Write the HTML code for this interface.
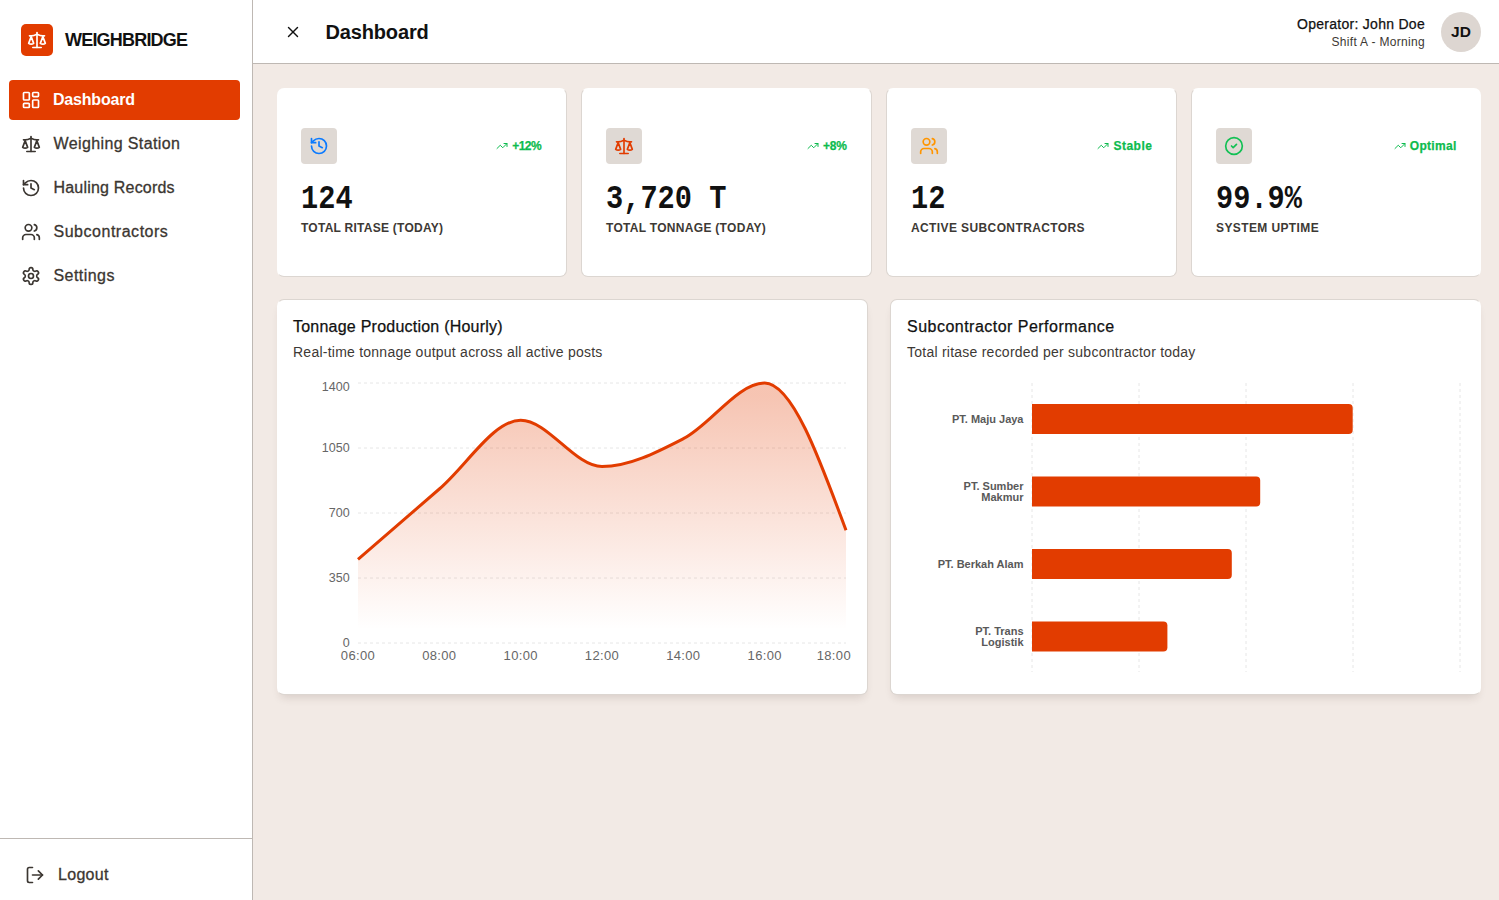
<!DOCTYPE html>
<html><head><meta charset="utf-8">
<style>
*{box-sizing:border-box;margin:0;padding:0}
html,body{width:1499px;height:900px;overflow:hidden;background:#f2eae5;font-family:"Liberation Sans",sans-serif;color:#111}
.abs{position:absolute}
.t{position:absolute;white-space:nowrap;line-height:1}
#sidebar{position:absolute;left:0;top:0;width:253px;height:900px;background:#fff;border-right:1px solid #beb8b3}
#header{position:absolute;left:253px;top:0;width:1246px;height:64px;background:#fff;border-bottom:1px solid #beb8b3}
.logo{position:absolute;left:21px;top:24px;width:32px;height:32px;background:#e23c00;border-radius:5px}
.nav-active{position:absolute;left:9px;top:80px;width:231px;height:40px;background:#e23c00;border-radius:4px}
.navt{font-size:16px;color:#3b3631;letter-spacing:0.3px;-webkit-text-stroke:0.3px #3b3631}
.card{position:absolute;background:#fff;border:1px solid #dcd6d1;border-radius:7px}
.stat{top:88px;height:189px;width:290px}
.ibox{position:absolute;left:23px;top:39px;width:36px;height:36px;background:#dfd9d4;border-radius:4px}
.ibox svg{position:absolute;left:8px;top:8px}
.num{position:absolute;left:23px;top:96px;font-family:"Liberation Mono",monospace;font-weight:bold;font-size:30px;line-height:30px;color:#111;white-space:nowrap;transform:scale(0.955,1.125);transform-origin:0 23px}
.lbl{position:absolute;left:23px;top:133.4px;font-size:12px;line-height:12px;font-weight:bold;letter-spacing:0.25px;color:#3d3935;white-space:nowrap}
.badge{position:absolute;right:24.5px;top:51px;-webkit-text-stroke:0.25px #0dbb4e;font-size:12px;line-height:12px;font-weight:bold;color:#0dbb4e;white-space:nowrap}
.badge svg{position:absolute;left:-16px;top:0px}
.sh > .ibox,.sh > .num,.sh > .lbl{margin-left:1px}
.chart{top:299px;height:396px;width:591px;box-shadow:0 6px 10px -4px rgba(60,40,30,0.16)}
.ctitle{position:absolute;left:15px;top:18.5px;font-size:16px;line-height:16px;color:#111;white-space:nowrap;-webkit-text-stroke:0.25px #111}
.csub{position:absolute;left:15px;top:45px;font-size:14px;line-height:14px;color:#3d3935;white-space:nowrap;letter-spacing:0.24px}
</style></head>
<body>
<div id="sidebar">
  <div class="logo">
    <svg class="abs" style="left:6px;top:6px" width="20" height="20" viewBox="0 0 24 24" fill="none" stroke="#fff" stroke-width="2" stroke-linecap="round" stroke-linejoin="round"><path d="m16 16 3-8 3 8c-.87.65-1.92 1-3 1s-2.13-.35-3-1Z"/><path d="m2 16 3-8 3 8c-.87.65-1.92 1-3 1s-2.13-.35-3-1Z"/><path d="M7 21h10"/><path d="M12 3v18"/><path d="M3 7h2c2 0 5-1 7-2 2 1 5 2 7 2h2"/></svg>
  </div>
  <div class="t" style="left:65px;top:30.8px;font-size:18px;font-weight:bold;letter-spacing:-0.8px;color:#111">WEIGHBRIDGE</div>
  <div class="nav-active"></div>
  <svg class="abs" style="left:21px;top:90px" width="20" height="20" viewBox="0 0 24 24" fill="none" stroke="#fff" stroke-width="2" stroke-linecap="round" stroke-linejoin="round"><rect width="7" height="9" x="3" y="3" rx="1"/><rect width="7" height="5" x="14" y="3" rx="1"/><rect width="7" height="9" x="14" y="12" rx="1"/><rect width="7" height="5" x="3" y="16" rx="1"/></svg>
  <div class="t" style="left:53px;top:92.2px;font-size:16px;font-weight:bold;color:#fff;letter-spacing:-0.2px">Dashboard</div>

  <svg class="abs" style="left:21px;top:134px" width="20" height="20" viewBox="0 0 24 24" fill="none" stroke="#3b3631" stroke-width="2" stroke-linecap="round" stroke-linejoin="round"><path d="m16 16 3-8 3 8c-.87.65-1.92 1-3 1s-2.13-.35-3-1Z"/><path d="m2 16 3-8 3 8c-.87.65-1.92 1-3 1s-2.13-.35-3-1Z"/><path d="M7 21h10"/><path d="M12 3v18"/><path d="M3 7h2c2 0 5-1 7-2 2 1 5 2 7 2h2"/></svg>
  <div class="t navt" style="left:53.5px;top:135.7px;letter-spacing:0.38px">Weighing Station</div>

  <svg class="abs" style="left:21px;top:178px" width="20" height="20" viewBox="0 0 24 24" fill="none" stroke="#3b3631" stroke-width="2" stroke-linecap="round" stroke-linejoin="round"><path d="M3 12a9 9 0 1 0 9-9 9.75 9.75 0 0 0-6.74 2.74L3 8"/><path d="M3 3v5h5"/><path d="M12 7v5l4 2"/></svg>
  <div class="t navt" style="left:53.5px;top:179.7px;letter-spacing:0.2px">Hauling Records</div>

  <svg class="abs" style="left:21px;top:222px" width="20" height="20" viewBox="0 0 24 24" fill="none" stroke="#3b3631" stroke-width="2" stroke-linecap="round" stroke-linejoin="round"><path d="M16 21v-2a4 4 0 0 0-4-4H6a4 4 0 0 0-4 4v2"/><circle cx="9" cy="7" r="4"/><path d="M22 21v-2a4 4 0 0 0-3-3.87"/><path d="M16 3.13a4 4 0 0 1 0 7.75"/></svg>
  <div class="t navt" style="left:53.5px;top:223.7px;letter-spacing:0.52px">Subcontractors</div>

  <svg class="abs" style="left:21px;top:266px" width="20" height="20" viewBox="0 0 24 24" fill="none" stroke="#3b3631" stroke-width="2" stroke-linecap="round" stroke-linejoin="round"><path d="M12.22 2h-.44a2 2 0 0 0-2 2v.18a2 2 0 0 1-1 1.73l-.43.25a2 2 0 0 1-2 0l-.15-.08a2 2 0 0 0-2.73.73l-.22.38a2 2 0 0 0 .73 2.73l.15.1a2 2 0 0 1 1 1.72v.51a2 2 0 0 1-1 1.74l-.15.09a2 2 0 0 0-.73 2.73l.22.38a2 2 0 0 0 2.73.73l.15-.08a2 2 0 0 1 2 0l.43.25a2 2 0 0 1 1 1.73V20a2 2 0 0 0 2 2h.44a2 2 0 0 0 2-2v-.18a2 2 0 0 1 1-1.73l.43-.25a2 2 0 0 1 2 0l.15.08a2 2 0 0 0 2.73-.73l.22-.39a2 2 0 0 0-.73-2.73l-.15-.08a2 2 0 0 1-1-1.74v-.5a2 2 0 0 1 1-1.74l.15-.09a2 2 0 0 0 .73-2.73l-.22-.38a2 2 0 0 0-2.73-.73l-.15.08a2 2 0 0 1-2 0l-.43-.25a2 2 0 0 1-1-1.73V4a2 2 0 0 0-2-2z"/><circle cx="12" cy="12" r="3"/></svg>
  <div class="t navt" style="left:53.5px;top:267.7px;letter-spacing:0.45px">Settings</div>

  <div class="abs" style="left:0;top:838px;width:252px;height:1px;background:#beb8b3"></div>
  <svg class="abs" style="left:25px;top:865px" width="20" height="20" viewBox="0 0 24 24" fill="none" stroke="#3b3631" stroke-width="2" stroke-linecap="round" stroke-linejoin="round"><path d="M9 21H5a2 2 0 0 1-2-2V5a2 2 0 0 1 2-2h4"/><polyline points="16 17 21 12 16 7"/><line x1="21" x2="9" y1="12" y2="12"/></svg>
  <div class="t navt" style="left:58px;top:866.5px">Logout</div>
</div>

<div id="header">
  <svg class="abs" style="left:31px;top:23px" width="18" height="18" viewBox="0 0 24 24" fill="none" stroke="#111" stroke-width="1.9" stroke-linecap="round" stroke-linejoin="round"><path d="M18 6 6 18"/><path d="m6 6 12 12"/></svg>
  <div class="t" style="left:72.5px;top:22px;font-size:20px;font-weight:bold;letter-spacing:-0.15px;color:#111">Dashboard</div>
  <div class="t" style="right:74px;top:16.9px;font-size:14px;color:#111;letter-spacing:0.28px;-webkit-text-stroke:0.25px #111">Operator: John Doe</div>
  <div class="t" style="right:74px;top:35.5px;font-size:12px;color:#3d3833;letter-spacing:0.32px">Shift A - Morning</div>
  <div class="abs" style="left:1188px;top:12px;width:40px;height:40px;border-radius:50%;background:#ddd6d1"></div>
  <div class="t" style="left:1188px;top:24.2px;width:40px;text-align:center;font-size:15.5px;font-weight:bold;color:#111">JD</div>
</div>

<!-- stat cards -->
<div class="card stat" style="left:277px;border-left-color:transparent;border-top-color:transparent">
  <div class="ibox"><svg width="20" height="20" viewBox="0 0 24 24" fill="none" stroke="#0a7aff" stroke-width="2" stroke-linecap="round" stroke-linejoin="round"><path d="M3 12a9 9 0 1 0 9-9 9.75 9.75 0 0 0-6.74 2.74L3 8"/><path d="M3 3v5h5"/><path d="M12 7v5l4 2"/></svg></div>
  <div class="badge" style="letter-spacing:-0.6px;right:25px"><svg width="12" height="12" viewBox="0 0 24 24" fill="none" stroke="#0dbb4e" stroke-width="2" stroke-linecap="round" stroke-linejoin="round"><polyline points="22 7 13.5 15.5 8.5 10.5 2 17"/><polyline points="16 7 22 7 22 13"/></svg>+12%</div>
  <div class="num">124</div>
  <div class="lbl" style="letter-spacing:0.26px">TOTAL RITASE (TODAY)</div>
</div>
<div class="card stat sh" style="left:581px;width:291px;border-top-color:transparent">
  <div class="ibox"><svg width="20" height="20" viewBox="0 0 24 24" fill="none" stroke="#e23c00" stroke-width="2" stroke-linecap="round" stroke-linejoin="round"><path d="m16 16 3-8 3 8c-.87.65-1.92 1-3 1s-2.13-.35-3-1Z"/><path d="m2 16 3-8 3 8c-.87.65-1.92 1-3 1s-2.13-.35-3-1Z"/><path d="M7 21h10"/><path d="M12 3v18"/><path d="M3 7h2c2 0 5-1 7-2 2 1 5 2 7 2h2"/></svg></div>
  <div class="badge" style="letter-spacing:-0.18px;right:24.32px"><svg width="12" height="12" viewBox="0 0 24 24" fill="none" stroke="#0dbb4e" stroke-width="2" stroke-linecap="round" stroke-linejoin="round"><polyline points="22 7 13.5 15.5 8.5 10.5 2 17"/><polyline points="16 7 22 7 22 13"/></svg>+8%</div>
  <div class="num">3,720 T</div>
  <div class="lbl" style="letter-spacing:0.3px">TOTAL TONNAGE (TODAY)</div>
</div>
<div class="card stat sh" style="left:886px;width:291px;border-top-color:transparent">
  <div class="ibox"><svg width="20" height="20" viewBox="0 0 24 24" fill="none" stroke="#ff9500" stroke-width="2" stroke-linecap="round" stroke-linejoin="round"><path d="M16 21v-2a4 4 0 0 0-4-4H6a4 4 0 0 0-4 4v2"/><circle cx="9" cy="7" r="4"/><path d="M22 21v-2a4 4 0 0 0-3-3.87"/><path d="M16 3.13a4 4 0 0 1 0 7.75"/></svg></div>
  <div class="badge" style="letter-spacing:0.5px;right:23.6px"><svg width="12" height="12" viewBox="0 0 24 24" fill="none" stroke="#0dbb4e" stroke-width="2" stroke-linecap="round" stroke-linejoin="round"><polyline points="22 7 13.5 15.5 8.5 10.5 2 17"/><polyline points="16 7 22 7 22 13"/></svg>Stable</div>
  <div class="num">12</div>
  <div class="lbl" style="letter-spacing:0.39px">ACTIVE SUBCONTRACTORS</div>
</div>
<div class="card stat sh" style="left:1191px;width:290px;border-top-color:transparent;border-right-color:transparent">
  <div class="ibox"><svg width="20" height="20" viewBox="0 0 24 24" fill="none" stroke="#12c054" stroke-width="2" stroke-linecap="round" stroke-linejoin="round"><circle cx="12" cy="12" r="10"/><path d="m9 12 2 2 4-4"/></svg></div>
  <div class="badge" style="letter-spacing:0.33px;right:23.3px"><svg width="12" height="12" viewBox="0 0 24 24" fill="none" stroke="#0dbb4e" stroke-width="2" stroke-linecap="round" stroke-linejoin="round"><polyline points="22 7 13.5 15.5 8.5 10.5 2 17"/><polyline points="16 7 22 7 22 13"/></svg>Optimal</div>
  <div class="num">99.9%</div>
  <div class="lbl" style="letter-spacing:0.39px">SYSTEM UPTIME</div>
</div>

<!-- chart cards -->
<div class="card chart" style="left:277px;border-left-color:transparent">
  <div class="ctitle" style="letter-spacing:0.23px">Tonnage Production (Hourly)</div>
  <div class="csub">Real-time tonnage output across all active posts</div>
</div>
<div class="card chart" style="left:890px;width:591px;border-right-color:transparent">
  <div class="ctitle" style="letter-spacing:0.48px;left:16px">Subcontractor Performance</div>
  <div class="csub" style="left:16px">Total ritase recorded per subcontractor today</div>
</div>

<!-- CHARTS -->
<svg class="abs" style="left:0;top:0" width="1499" height="900" viewBox="0 0 1499 900">
<defs><linearGradient id="ag" x1="0" y1="0" x2="0" y2="1"><stop offset="5%" stop-color="#e23c00" stop-opacity="0.3"/><stop offset="95%" stop-color="#e23c00" stop-opacity="0"/></linearGradient></defs>
<line x1="358" x2="846" y1="643" y2="643" stroke="#e6e6e6" stroke-dasharray="3 3"/>
<line x1="358" x2="846" y1="578" y2="578" stroke="#e6e6e6" stroke-dasharray="3 3"/>
<line x1="358" x2="846" y1="513" y2="513" stroke="#e6e6e6" stroke-dasharray="3 3"/>
<line x1="358" x2="846" y1="448" y2="448" stroke="#e6e6e6" stroke-dasharray="3 3"/>
<line x1="358" x2="846" y1="383" y2="383" stroke="#e6e6e6" stroke-dasharray="3 3"/>
<path d="M358.00,559.40C385.11,535.80,412.22,512.20,439.33,489.00C466.44,465.80,493.56,420.20,520.67,420.20C547.78,420.20,574.89,466.60,602.00,466.60C629.11,466.60,656.22,452.63,683.33,438.70C710.44,424.77,737.56,383.00,764.67,383.00C791.78,383.00,818.89,456.65,846.00,530.30L846,643L358,643Z" fill="url(#ag)" stroke="none"/>
<path d="M358.00,559.40C385.11,535.80,412.22,512.20,439.33,489.00C466.44,465.80,493.56,420.20,520.67,420.20C547.78,420.20,574.89,466.60,602.00,466.60C629.11,466.60,656.22,452.63,683.33,438.70C710.44,424.77,737.56,383.00,764.67,383.00C791.78,383.00,818.89,456.65,846.00,530.30" fill="none" stroke="#e23c00" stroke-width="3"/>
<text x="349.6" y="390.8" text-anchor="end" font-size="12.5" fill="#666" font-family="Liberation Sans">1400</text>
<text x="349.6" y="452" text-anchor="end" font-size="12.5" fill="#666" font-family="Liberation Sans">1050</text>
<text x="349.6" y="517" text-anchor="end" font-size="12.5" fill="#666" font-family="Liberation Sans">700</text>
<text x="349.6" y="582" text-anchor="end" font-size="12.5" fill="#666" font-family="Liberation Sans">350</text>
<text x="349.6" y="646.8" text-anchor="end" font-size="12.5" fill="#666" font-family="Liberation Sans">0</text>
<text x="358.0" y="659.6" text-anchor="middle" font-size="13" letter-spacing="0.35" fill="#666" font-family="Liberation Sans">06:00</text>
<text x="439.3" y="659.6" text-anchor="middle" font-size="13" letter-spacing="0.35" fill="#666" font-family="Liberation Sans">08:00</text>
<text x="520.7" y="659.6" text-anchor="middle" font-size="13" letter-spacing="0.35" fill="#666" font-family="Liberation Sans">10:00</text>
<text x="602.0" y="659.6" text-anchor="middle" font-size="13" letter-spacing="0.35" fill="#666" font-family="Liberation Sans">12:00</text>
<text x="683.3" y="659.6" text-anchor="middle" font-size="13" letter-spacing="0.35" fill="#666" font-family="Liberation Sans">14:00</text>
<text x="764.7" y="659.6" text-anchor="middle" font-size="13" letter-spacing="0.35" fill="#666" font-family="Liberation Sans">16:00</text>
<text x="851" y="659.6" text-anchor="end" font-size="13" letter-spacing="0.35" fill="#666" font-family="Liberation Sans">18:00</text>
<line x1="1032" x2="1032" y1="383" y2="672" stroke="#e6e6e6" stroke-dasharray="3 3"/>
<line x1="1139" x2="1139" y1="383" y2="672" stroke="#e6e6e6" stroke-dasharray="3 3"/>
<line x1="1246" x2="1246" y1="383" y2="672" stroke="#e6e6e6" stroke-dasharray="3 3"/>
<line x1="1353" x2="1353" y1="383" y2="672" stroke="#e6e6e6" stroke-dasharray="3 3"/>
<line x1="1460" x2="1460" y1="383" y2="672" stroke="#e6e6e6" stroke-dasharray="3 3"/>
<path d="M1032,404H1348.7A4,4,0,0,1,1352.7,408V430A4,4,0,0,1,1348.7,434H1032Z" fill="#e23c00"/>
<text x="1023.5" y="423.0" text-anchor="end" font-size="11" font-weight="bold" fill="#595959" font-family="Liberation Sans">PT. Maju Jaya</text>
<path d="M1032,476.5H1256.2A4,4,0,0,1,1260.2,480.5V502.5A4,4,0,0,1,1256.2,506.5H1032Z" fill="#e23c00"/>
<text x="1023.5" y="490.2" text-anchor="end" font-size="11" font-weight="bold" fill="#595959" font-family="Liberation Sans">PT. Sumber</text>
<text x="1023.5" y="501.3" text-anchor="end" font-size="11" font-weight="bold" fill="#595959" font-family="Liberation Sans">Makmur</text>
<path d="M1032,549H1227.8A4,4,0,0,1,1231.8,553V575A4,4,0,0,1,1227.8,579H1032Z" fill="#e23c00"/>
<text x="1023.5" y="568.0" text-anchor="end" font-size="11" font-weight="bold" fill="#595959" font-family="Liberation Sans">PT. Berkah Alam</text>
<path d="M1032,621.5H1163.4A4,4,0,0,1,1167.4,625.5V647.5A4,4,0,0,1,1163.4,651.5H1032Z" fill="#e23c00"/>
<text x="1023.5" y="635.2" text-anchor="end" font-size="11" font-weight="bold" fill="#595959" font-family="Liberation Sans">PT. Trans</text>
<text x="1023.5" y="646.3" text-anchor="end" font-size="11" font-weight="bold" fill="#595959" font-family="Liberation Sans">Logistik</text>
</svg>
</body></html>
